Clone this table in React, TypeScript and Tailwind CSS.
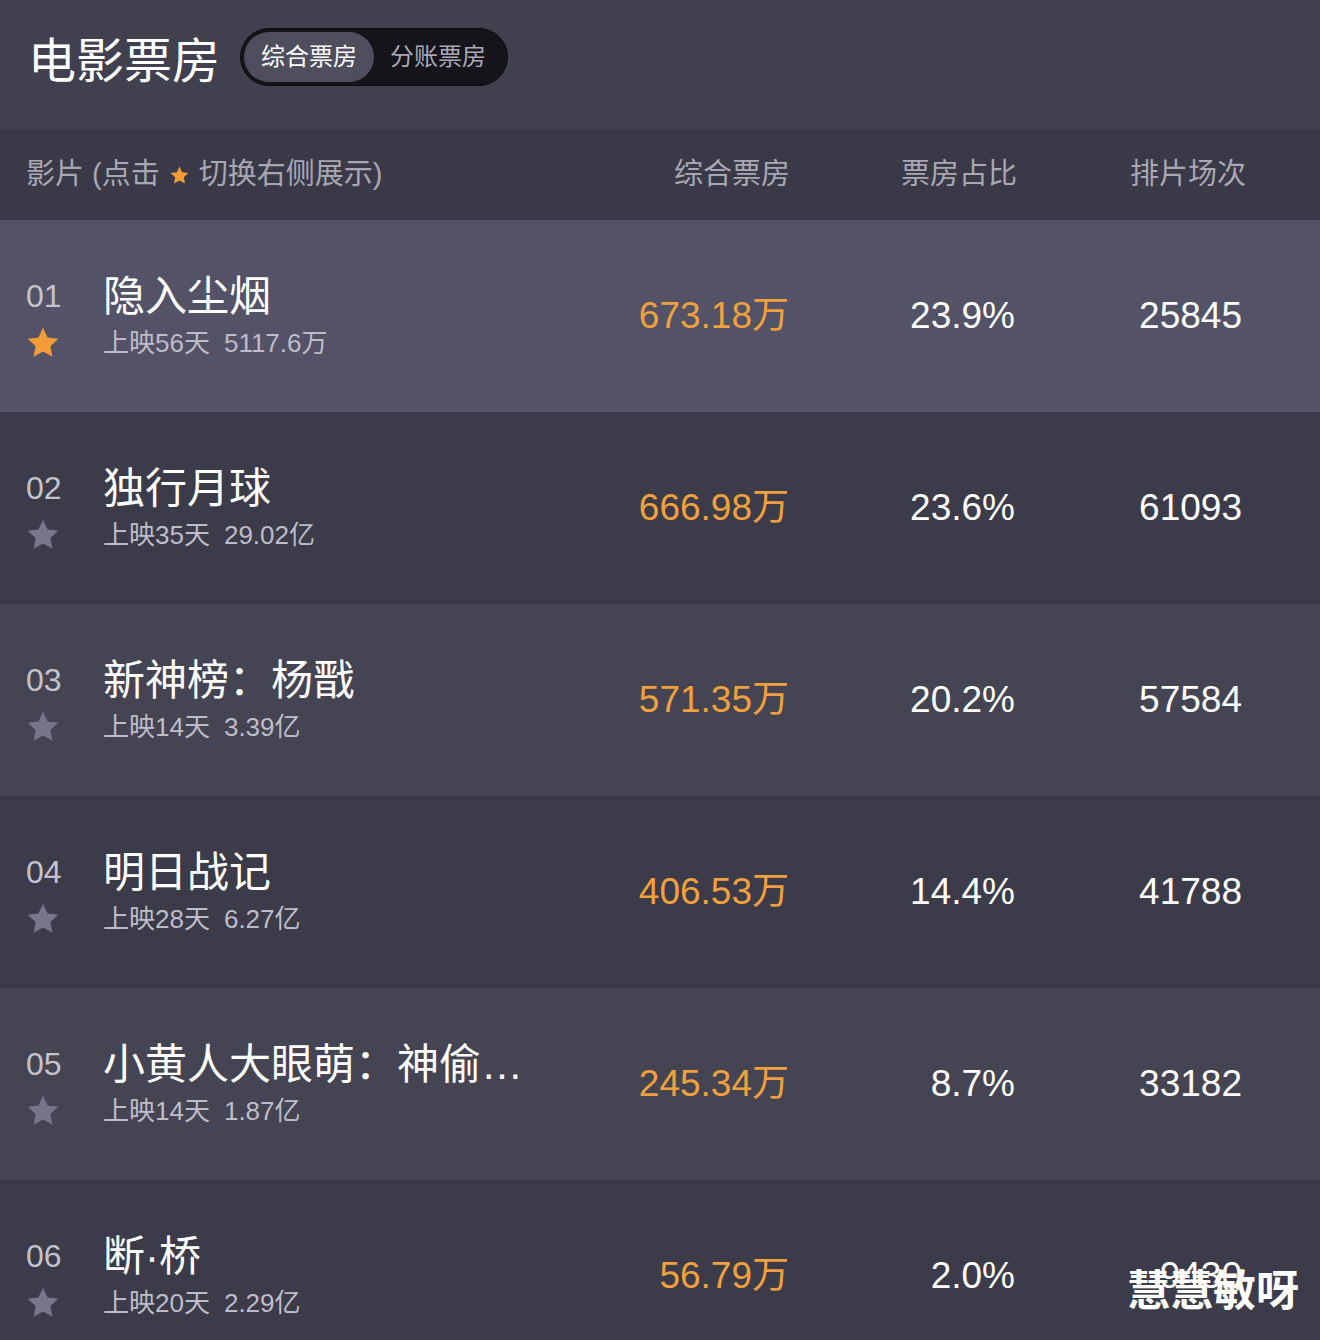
import React from "react";

const films = [
    { rank: "01", title: "隐入尘烟", days: "上映56天", total: "5117.6万", box: "673.18万", share: "23.9%", shows: "25845", starred: true },
    { rank: "02", title: "独行月球", days: "上映35天", total: "29.02亿", box: "666.98万", share: "23.6%", shows: "61093" },
    { rank: "03", title: "新神榜：杨戬", days: "上映14天", total: "3.39亿", box: "571.35万", share: "20.2%", shows: "57584" },
    { rank: "04", title: "明日战记", days: "上映28天", total: "6.27亿", box: "406.53万", share: "14.4%", shows: "41788" },
    { rank: "05", title: "小黄人大眼萌：神偷奶爸前传", days: "上映14天", total: "1.87亿", box: "245.34万", share: "8.7%", shows: "33182" },
    { rank: "06", title: "断·桥", days: "上映20天", total: "2.29亿", box: "56.79万", share: "2.0%", shows: "9430" },
];

const rowBg = ["bg-[#535266]", "bg-[#3c3b49]", "bg-[#454453]", "bg-[#3c3b49]", "bg-[#454453]", "bg-[#3c3b49]"];

function Star({ className }: { className?: string }) {
    return (
        <svg viewBox="0 0 24 24" className={className} fill="currentColor">
            <path d="M12 1.8l3.05 6.55 7.15.85-5.3 4.9 1.42 7.1L12 17.6l-6.32 3.6 1.42-7.1-5.3-4.9 7.15-.85z" strokeLinejoin="round" />
        </svg>
    );
}

export default function App() {
    return (
        <div className="relative h-[1340px] w-[1320px] overflow-hidden bg-[#41404f] font-['Liberation_Sans','Noto_Sans_CJK_SC',sans-serif]">
            {/* top bar */}
            <div className="flex h-[130px] items-start pl-[28px] pt-[28px] gap-[20px]">
                <h1 className="text-[48px] leading-[58px] text-white font-['Noto_Sans_CJK_SC',sans-serif]">电影票房</h1>
                <div className="flex h-[58px] items-center rounded-full bg-[#15141b] border border-[#0c0b10] p-[3px]">
                    <div className="flex h-[50px] items-center rounded-full bg-[#4f4e5e] px-[17px] text-[24px] text-white">综合票房</div>
                    <div className="flex h-[50px] items-center pl-[16px] pr-[18px] text-[24px] text-[#a9a8b4]">分账票房</div>
                </div>
            </div>

            {/* column header */}
            <div className="flex h-[90px] items-center bg-[#3a3947] pl-[26px] text-[29px] text-[#a8a7b3]">
                <div className="flex flex-1 items-center">
                    影片 (点击
                    <Star className="mx-[9px] h-[21px] w-[21px] text-[#f29c38]" />
                    切换右侧展示)
                </div>
                <div className="text-right">综合票房</div>
                <div className="w-[227px] text-right">票房占比</div>
                <div className="w-[229px] text-right">排片场次</div>
                <div className="w-[74px]" />
            </div>

            {/* rows */}
            {films.map((f, i) => (
                <div key={f.rank} className={`flex h-[192px] items-center pl-[26px] ${rowBg[i]}`}>
                    <div className="grid flex-1 grid-cols-[77px_1fr] items-center">
                        <div className="text-[32px] leading-[50px] text-[#c3c2cd]">{f.rank}</div>
                        <div className="max-w-[432px] truncate pt-[2px] text-[42px] leading-[52px] text-white">{f.title}</div>
                        <div className="flex h-[40px] items-center">
                            <Star className={`ml-[-1px] h-[36px] w-[36px] ${f.starred ? "text-[#f29c38]" : "text-[#76758a]"}`} />
                        </div>
                        <div className="flex gap-[14px] text-[26px] leading-[40px] text-[#bdbcc8]">
                            <span>{f.days}</span>
                            <span>{f.total}</span>
                        </div>
                    </div>
                    <div className="text-right text-[37px] text-[#f0a03c]">{f.box}</div>
                    <div className="w-[226px] text-right text-[37px] text-white">{f.share}</div>
                    <div className="w-[227px] text-right text-[37px] text-white">{f.shows}</div>
                    <div className="w-[78px]" />
                </div>
            ))}

            {/* watermark */}
            <div className="absolute left-[1127px] top-[1260px] text-[43px] leading-[54px] font-bold text-white font-['Noto_Sans_CJK_SC',sans-serif]">
                慧慧敏呀
            </div>
        </div>
    );
}
